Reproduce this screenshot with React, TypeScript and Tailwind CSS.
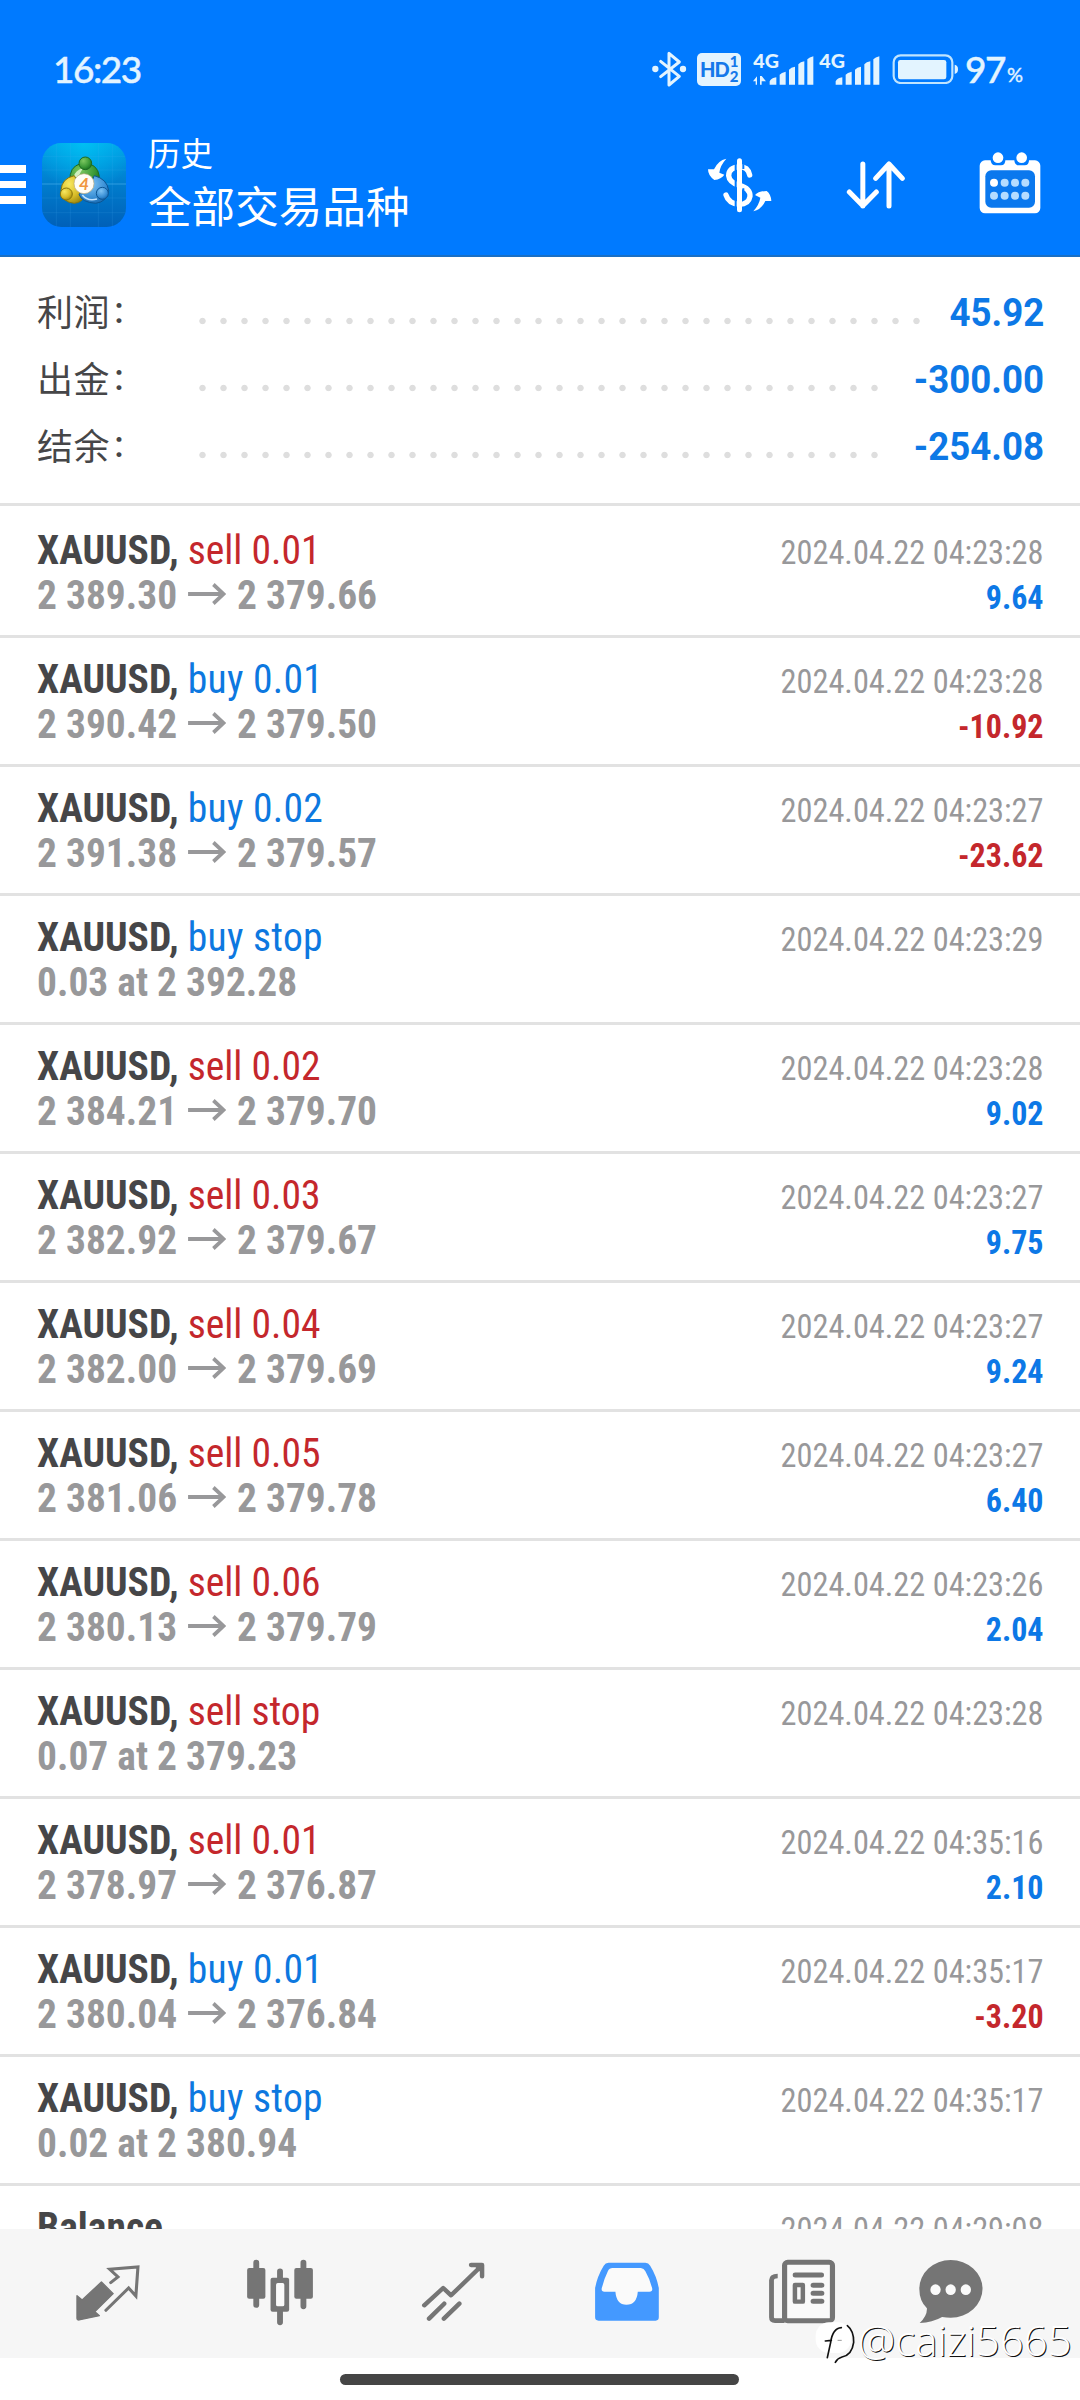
import React from "react";

type Deal = {
  side?: "sell" | "buy";
  title: string;
  open?: string;
  close?: string;
  note?: string;
  time: string;
  profit?: string;
};

const deals: Deal[] = [
  { side: "sell", title: "sell 0.01", open: "2 389.30", close: "2 379.66", time: "2024.04.22 04:23:28", profit: "9.64" },
  { side: "buy", title: "buy 0.01", open: "2 390.42", close: "2 379.50", time: "2024.04.22 04:23:28", profit: "-10.92" },
  { side: "buy", title: "buy 0.02", open: "2 391.38", close: "2 379.57", time: "2024.04.22 04:23:27", profit: "-23.62" },
  { side: "buy", title: "buy stop", note: "0.03 at 2 392.28", time: "2024.04.22 04:23:29" },
  { side: "sell", title: "sell 0.02", open: "2 384.21", close: "2 379.70", time: "2024.04.22 04:23:28", profit: "9.02" },
  { side: "sell", title: "sell 0.03", open: "2 382.92", close: "2 379.67", time: "2024.04.22 04:23:27", profit: "9.75" },
  { side: "sell", title: "sell 0.04", open: "2 382.00", close: "2 379.69", time: "2024.04.22 04:23:27", profit: "9.24" },
  { side: "sell", title: "sell 0.05", open: "2 381.06", close: "2 379.78", time: "2024.04.22 04:23:27", profit: "6.40" },
  { side: "sell", title: "sell 0.06", open: "2 380.13", close: "2 379.79", time: "2024.04.22 04:23:26", profit: "2.04" },
  { side: "sell", title: "sell stop", note: "0.07 at 2 379.23", time: "2024.04.22 04:23:28" },
  { side: "sell", title: "sell 0.01", open: "2 378.97", close: "2 376.87", time: "2024.04.22 04:35:16", profit: "2.10" },
  { side: "buy", title: "buy 0.01", open: "2 380.04", close: "2 376.84", time: "2024.04.22 04:35:17", profit: "-3.20" },
  { side: "buy", title: "buy stop", note: "0.02 at 2 380.94", time: "2024.04.22 04:35:17" },
  { title: "Balance", time: "2024.04.22 04:29:08" },
];

function Signal({ arrows }: { arrows?: boolean }) {
  return (
    <svg className="h-[34px] w-[61px] shrink-0 overflow-visible" viewBox="335 20 183 102" fill="#e3f4ff">
      <text x="336" y="68" fontSize="57" fontWeight="900" fontFamily="Lato, sans-serif" textLength="77" lengthAdjust="spacingAndGlyphs">4G</text>
      {arrows && <path d="M343 118V108H335L347 93V118ZM356 92V118H361V108H374L361 92Z" />}
      <path d="M385 118V108Q390 98 405 96V118ZM415 118V88Q420 82 433 79V118ZM443 118V73Q449 66 461 64V118ZM471 118V57Q477 50 489 48V118ZM498 118V42Q504 36 516 33V118Z" />
    </svg>
  );
}

function StatusBar() {
  return (
    <div className="flex h-[138px] items-center pr-[57px] pl-[53px] font-['Lato',sans-serif] text-[#e3f4ff]">
      <span className="text-[37px] leading-[40px] font-medium tracking-[-1.5px] [-webkit-text-stroke:0.4px_#e3f4ff]">16:23</span>
      <div className="ml-auto flex items-center">
        <svg className="h-[38px] w-[36px]" viewBox="30 16 108 114" fill="none" stroke="#e3f4ff" strokeWidth="9" strokeLinejoin="round" strokeLinecap="round">
          <path d="M59 50L115 95L84 121V26L115 52L59 96" />
          <circle cx="43" cy="73" r="5" fill="#e3f4ff" />
          <circle cx="126" cy="73" r="5" fill="#e3f4ff" />
        </svg>
        <div className="ml-[10px] flex h-[33px] w-[44px] items-center rounded-[5px] bg-[#e3f4ff] pl-[3px] text-[20px] font-black text-[#1478ea]">
          <span className="tracking-[-1px]">HD</span>
          <span className="ml-px flex flex-col text-[15px] leading-[15px]"><span>1</span><span>2</span></span>
        </div>
        <div className="ml-[12px] flex"><Signal arrows /></div>
        <div className="ml-[5px] flex"><Signal /></div>
        <svg className="ml-[12px] h-[30px] w-[66px]" viewBox="752 28 198 90" fill="none">
          <rect x="757" y="32" width="176" height="83" rx="21" stroke="#bfe4ff" strokeWidth="6.500" />
          <rect x="770" y="46" width="145" height="58" rx="7" fill="#e3f4ff" />
          <path d="M940 60Q950 62 950 74T940 88Z" fill="#e3f4ff" />
        </svg>
        <span className="ml-[7px] text-[37px] leading-[40px] font-medium tracking-[-1.5px] [-webkit-text-stroke:0.4px_#e3f4ff]">97</span>
        <span className="pt-[10px] pl-[2px] text-[20px] [-webkit-text-stroke:0.4px_#e3f4ff]">%</span>
      </div>
    </div>
  );
}

function AppLogo() {
  return (
    <svg className="h-[84px] w-[84px]" viewBox="125 36 252 252">
      <defs>
        <linearGradient id="tile" x1="0" y1="0" x2="0" y2="1">
          <stop offset="0" stopColor="#00a0e6" />
          <stop offset="0.5" stopColor="#007ccc" />
          <stop offset="1" stopColor="#0060b8" />
        </linearGradient>
        <radialGradient id="glow" cx="0.5" cy="0" r="0.6">
          <stop offset="0" stopColor="#00ccf8" stopOpacity="0.7" />
          <stop offset="1" stopColor="#00ccf8" stopOpacity="0" />
        </radialGradient>
        <radialGradient id="green" cx="0.35" cy="0.3" r="0.8"><stop offset="0" stopColor="#7cc860" /><stop offset="0.6" stopColor="#3c9a38" /><stop offset="1" stopColor="#146a1a" /></radialGradient>
        <radialGradient id="gold" cx="0.35" cy="0.3" r="0.8"><stop offset="0" stopColor="#f8e860" /><stop offset="0.6" stopColor="#d8bc28" /><stop offset="1" stopColor="#94800c" /></radialGradient>
        <radialGradient id="azure" cx="0.4" cy="0.3" r="0.8"><stop offset="0" stopColor="#80c4f4" /><stop offset="0.6" stopColor="#3a90d6" /><stop offset="1" stopColor="#1060a8" /></radialGradient>
      </defs>
      <rect x="125" y="36" width="252" height="252" rx="58" fill="url(#tile)" />
      <rect x="125" y="36" width="252" height="252" rx="58" fill="url(#glow)" />
      <g stroke="#4fb4ee" strokeOpacity="0.22" strokeWidth="2">
        <path d="M168 38V286M210 36V288M294 36V288M336 38V286M127 76H375M125 117H377M125 201H377M127 245H375" />
        <path d="M125 159H377" strokeOpacity="0.6" strokeWidth="3" />
      </g>
      <g strokeWidth="3">
        <path d="M209 150Q206 108 240 98H268Q302 112 296 152L275 168H225Z" fill="url(#green)" stroke="#1d6b23" />
        <path d="M220 138Q224 118 248 112Q240 124 234 138Z" fill="#d0efc0" />
        <path d="M222 134Q184 142 182 178Q184 214 222 217Q244 214 252 198L230 150Z" fill="url(#gold)" stroke="#8a760c" />
        <path d="M282 134Q320 144 325 178Q320 213 286 217Q244 214 236 190L270 160Z" fill="url(#azure)" stroke="#0d5593" />
        <path d="M246 192Q262 212 290 204" fill="none" stroke="#bfe2ff" strokeWidth="5" />
        <circle cx="255" cy="97" r="19" fill="url(#green)" stroke="#1d6b23" />
        <circle cx="198" cy="189" r="18" fill="url(#gold)" stroke="#8a760c" />
        <circle cx="306" cy="187" r="18" fill="url(#azure)" stroke="#0d5593" />
      </g>
      <circle cx="251" cy="158" r="30" fill="#fffdf6" stroke="#b9a97a" strokeWidth="2" />
      <text x="251" y="177" textAnchor="middle" fontSize="52" fontWeight="700" fontStyle="italic" fontFamily="Lato, sans-serif" fill="#f0963e">4</text>
    </svg>
  );
}

function Header() {
  return (
    <header className="h-[257px] shrink-0 border-b-2 border-[#1a6fc4] bg-[#007aff]">
      <StatusBar />
      <div className="flex h-[93px] items-center text-white">
        <div className="flex w-[26px] flex-col gap-[8px]">
          <i className="h-[7.5px] bg-white" />
          <i className="h-[7.5px] bg-white" />
          <i className="h-[7.5px] bg-white" />
        </div>
        <div className="ml-[16px]"><AppLogo /></div>
        <div className="-mt-[8px] ml-[22px] font-['Noto_Sans_CJK_SC',sans-serif] font-normal">
          <div className="text-[32.5px] leading-[46px]">历史</div>
          <div className="text-[43.6px] leading-[58px]">全部交易品种</div>
        </div>
        <svg className="ml-auto h-[60px] w-[72px]" viewBox="255 370 216 180" fill="none" stroke="#fff">
          <path d="M389 430Q384 405 358 405Q326 408 326 432Q328 452 358 461Q391 470 390 494Q386 518 358 518Q326 516 318 490" strokeWidth="16" strokeLinecap="round" />
          <path d="M347 380V540M370 398V412M370 470V485" stroke="#007aff" strokeWidth="6" />
          <path d="M358.500 387V534" strokeWidth="15" strokeLinecap="round" />
          <g fill="#fff" stroke="none">
            <path d="M319 381Q294 386 282 413L264 413Q264 432 283 445Q304 442 313 429L298 423Q300 402 319 381Z" />
            <path d="M400 539Q424 534 436 508L454 508Q453 488 440 478Q416 478 405 490L421 498Q418 518 400 539Z" />
          </g>
        </svg>
        <svg className="ml-[69px] h-[50px] w-[60px]" viewBox="677 385 180 150" fill="none" stroke="#fff" strokeWidth="15" strokeLinecap="round" strokeLinejoin="round">
          <path d="M727.500 397V523M687 481L727.500 522L768 481M806 523V397M766 440L806 397L846 440" />
        </svg>
        <svg className="-mt-[3px] mr-[39px] ml-[73px] h-[62px] w-[62px]" viewBox="1078 365 186 186">
          <rect x="1080" y="390" width="182" height="159" rx="16" fill="#fff" />
          <rect x="1097" y="420" width="149" height="112" rx="18" fill="#0a78ee" />
          <path d="M1113 380V390Q1114 405 1127 405H1144Q1157 405 1157 390V380ZM1184 380V390Q1185 405 1198 405H1215Q1228 405 1228 390V380Z" fill="#007aff" />
          <g fill="#fff"><circle cx="1135" cy="382" r="16" /><circle cx="1206" cy="382" r="16" /><circle cx="1123" cy="457" r="12" /></g>
          <g fill="#b5dcff">
            <circle cx="1155" cy="457" r="12" /><circle cx="1186" cy="457" r="12" /><circle cx="1217" cy="457" r="12" />
            <circle cx="1123" cy="496" r="12" /><circle cx="1155" cy="496" r="12" /><circle cx="1186" cy="496" r="12" /><circle cx="1217" cy="496" r="12" />
          </g>
        </svg>
      </div>
    </header>
  );
}

function SummaryRow({ label, value, wide }: { label: string; value: string; wide?: boolean }) {
  return (
    <div className="flex h-[67px] items-center pr-[36px] pl-[37px]">
      <div className="mb-[5px] flex w-[155px] font-['Noto_Sans_CJK_SC',sans-serif] text-[36px] leading-[56px] tracking-[0.6px] text-[#464648]">
        {label}
        <span className="ml-[4px] pt-[1px] font-['Roboto',sans-serif] font-medium">:</span>
      </div>
      <div className={`mt-[17px] h-[8px] bg-[radial-gradient(circle_at_50%_50%,#dedede_2.8px,transparent_3.6px)] bg-[length:21px_8px] ${wide ? "w-[735px]" : "w-[693px]"}`} />
      <span className="ml-auto origin-right scale-x-[0.965] pt-px font-['Roboto',sans-serif] text-[38px] leading-[44px] font-bold text-[#0d78e6]">{value}</span>
    </div>
  );
}

function PriceArrow() {
  return (
    <svg className="mx-[11px] inline-block h-[22px] w-[41px] align-[4px]" viewBox="0 0 40 22" preserveAspectRatio="none" fill="none" stroke="#98989a" strokeWidth="3.800">
      <path d="M1 11H37M27 1.500L37.500 11L27 20.500" />
    </svg>
  );
}

function DealRow({ deal }: { deal: Deal }) {
  const tone = deal.side === "sell" ? "text-[#c4272c]" : "text-[#0d78e0] tracking-[0.3px]";
  const gain = deal.profit?.startsWith("-") ? "text-[#c4272c]" : "text-[#0d78e6]";
  return (
    <div className="h-[129px] shrink-0 border-b-[3px] border-[#e2e2e2] pt-[18px] pr-[36px] pl-[37px] font-['Roboto',sans-serif] leading-[45px] [font-stretch:75%]">
      <div className="flex h-[45px] items-baseline justify-between">
        <span className="origin-left scale-x-[0.953] text-[41.5px] font-bold text-[#464648]">
          {deal.side ? <>XAUUSD, <span className={`font-normal ${tone}`}>{deal.title}</span></> : deal.title}
        </span>
        <span className="origin-right scale-x-[0.965] text-[33.5px] text-[#98989a]">{deal.time}</span>
      </div>
      <div className="flex h-[45px] items-baseline justify-between">
        <span className="origin-left scale-x-[0.95] text-[41.5px] font-bold text-[#98989a]">
          {deal.note ?? (deal.open && <>{deal.open}<PriceArrow />{deal.close}</>)}
        </span>
        <span className={`origin-right scale-x-[0.955] text-[33.5px] font-bold ${gain}`}>{deal.profit}</span>
      </div>
    </div>
  );
}

function NavIcon({ box, className, children }: { box: string; className: string; children: React.ReactNode }) {
  return (
    <svg className={`h-[68.3px] w-[70px] shrink-0 ${className}`} viewBox={box} preserveAspectRatio="none" fill="none" strokeLinecap="round" strokeLinejoin="round">
      {children}
    </svg>
  );
}

function BottomNav() {
  return (
    <nav className="flex h-[129px] shrink-0 bg-[#f6f6f6] pt-[29.3px]">
      <NavIcon box="211.400 235 203.300 205" className="ml-[73px]">
        <path d="M223 348L238 361L294 307L328 342L275 396L288 408L229 421Q223 421 223 416Z" fill="#757575" stroke="#757575" strokeWidth="4" />
        <path d="M321 309L342 292L318 269L400 262L394 349L373 325L307 392" stroke="#757575" strokeWidth="9" strokeLinejoin="miter" />
      </NavIcon>
      <NavIcon box="711.800 235 203.300 205" className="ml-[102px]">
        <path d="M744.500 249V376M881.500 249V380M813.500 275V428" stroke="#757575" strokeWidth="17" />
        <g fill="#757575"><rect x="718" y="265" width="53" height="92" rx="6" /><rect x="855" y="265" width="54" height="92" rx="6" /><rect x="786" y="294" width="54" height="102" rx="6" /></g>
        <rect x="802" y="310" width="24" height="70" rx="5" fill="#fafafa" />
      </NavIcon>
      <NavIcon box="1213.900 235 203.300 205" className="ml-[103px]">
        <path d="M1232 377L1287 325L1310 347L1397 260M1368 256H1400V290M1246 417L1290 372M1289 417L1334 372" stroke="#757575" strokeWidth="13" />
        <path d="M1375 256H1400V282Z" fill="#757575" />
      </NavIcon>
      <NavIcon box="152 235 203.300 205" className="ml-[104px]">
        <path d="M200 249H307Q316 249 321 258Q340 290 346 325V413Q346 423 337 423H171Q161 423 161 413V325Q167 290 186 258Q191 249 200 249Z" fill="#4499ff" />
        <path d="M212 265H294Q303 266 307 275Q320 298 327 327Q328 336 319 336H285Q282 375 252 375Q223 375 220 336H188Q179 336 180 327Q187 298 198 275Q202 265 212 265Z" fill="#fafafa" />
      </NavIcon>
      <NavIcon box="658.900 235 203.300 205" className="ml-[105px]">
        <path d="M710 423H682Q672 423 672 413V302Q672 289 690 289" stroke="#757575" strokeWidth="14" strokeLinecap="butt" />
        <rect x="710" y="248" width="139" height="175" rx="9" fill="#fafafa" stroke="#757575" strokeWidth="15" />
        <path d="M741 286H817M793 317H818M793 341H818M793 365H818" stroke="#757575" strokeWidth="15" />
        <rect x="740" y="316" width="23" height="50" stroke="#757575" strokeWidth="13" />
      </NavIcon>
      <NavIcon box="1092.300 235 203.300 205" className="ml-[79px]">
        <path d="M1193 241A92 86 0 1 1 1193 414Q1181 414 1168 412Q1140 429 1103 430Q1125 408 1124 386Q1102 364 1102 328A92 86 0 0 1 1193 241Z" fill="#757575" />
        <g fill="#fafafa"><ellipse cx="1149" cy="330" rx="15" ry="16" /><ellipse cx="1193" cy="330" rx="15" ry="16" /><ellipse cx="1237" cy="330" rx="15" ry="16" /></g>
      </NavIcon>
    </nav>
  );
}

function Watermark() {
  return (
    <div className="absolute top-[2315px] left-[814px] flex items-center">
      <svg className="h-[50px] w-[44px]" viewBox="42 18 132 150" fill="none" strokeLinecap="round">
        <rect x="47" y="40" width="106" height="92" rx="40" fill="#fff" />
        <path d="M76 96L94 94M82 146L92 100Q98 58 124 56M142 50Q162 66 161 100Q156 138 126 144Q112 148 106 160" stroke="#111" strokeWidth="5" />
        <path d="M114 94H124" stroke="#999" strokeWidth="3" />
      </svg>
      <span className="font-['Open_Sans',sans-serif] text-[42px] leading-[50px] font-light text-white [text-shadow:1px_1px_0.5px_#111]">@caizi5665</span>
    </div>
  );
}

export default function App() {
  return (
    <div className="relative flex h-[2400px] w-[1080px] flex-col overflow-hidden bg-white">
      <Header />
      <section className="h-[249px] shrink-0 border-b-[3px] border-[#e2e2e2] pt-[22px]">
        <SummaryRow label="利润" value="45.92" wide />
        <SummaryRow label="出金" value="-300.00" />
        <SummaryRow label="结余" value="-254.08" />
      </section>
      <main className="flex h-[1723px] shrink-0 flex-col overflow-hidden pt-[3px]">
        {deals.map((deal, i) => <DealRow key={i} deal={deal} />)}
      </main>
      <BottomNav />
      <div className="mt-[16px] ml-[340px] h-[10.500px] w-[399px] shrink-0 rounded-full bg-[#454545]" />
      <Watermark />
    </div>
  );
}
